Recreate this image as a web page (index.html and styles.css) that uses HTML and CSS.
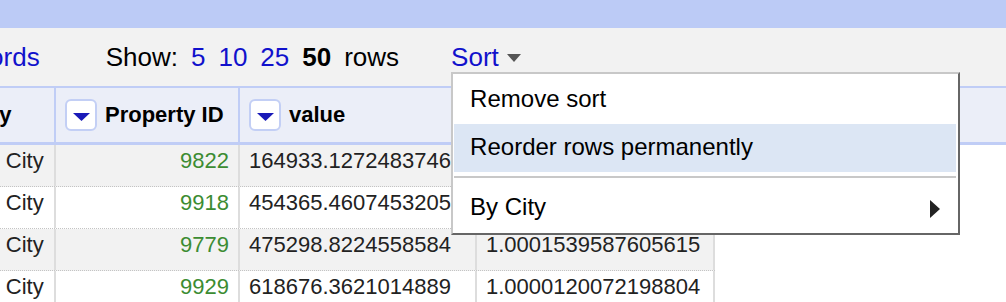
FILE: index.html
```html
<!DOCTYPE html>
<html lang="en">

<head>
    <meta charset="UTF-8">
    <meta name="viewport" content="width=device-width, initial-scale=1.0">
    <title>Rows - Sort</title>
    <link rel="stylesheet" href="styles.css">
</head>

<body>
    <div class="topbar"></div>

    <div class="toolbar">
        <a class="records" href="#">records</a>
        <div class="pager">
            <span>Show:</span>
            <a href="#">5</a>
            <a href="#">10</a>
            <a href="#">25</a>
            <span class="current">50</span>
            <span>rows</span>
        </div>
        <div class="sort">
            <a href="#">Sort</a>
            <span class="caret"></span>

            <!-- sort menu, open -->
            <div class="menu">
                <div class="menu-item">Remove sort</div>
                <div class="menu-item active">Reorder rows permanently</div>
                <div class="menu-sep"></div>
                <div class="menu-item">
                    <span>By City</span>
                    <svg class="submenu" width="10" height="18" viewBox="0 0 10 18">
                        <polygon points="0,0 10,9 0,18" fill="#222" />
                    </svg>
                </div>
            </div>
        </div>
    </div>

    <div class="grid">
        <div class="head">
            <div class="hcell c1"><span class="colbtn"><svg width="17" height="8" viewBox="0 0 17 8"><polygon points="0,0 17,0 8.5,8" /></svg></span>City</div>
            <div class="hcell c2"><span class="colbtn"><svg width="17" height="8" viewBox="0 0 17 8"><polygon points="0,0 17,0 8.5,8" /></svg></span>Property ID</div>
            <div class="hcell c3"><span class="colbtn"><svg width="17" height="8" viewBox="0 0 17 8"><polygon points="0,0 17,0 8.5,8" /></svg></span>value</div>
            <div class="hcell c4"><span class="colbtn"><svg width="17" height="8" viewBox="0 0 17 8"><polygon points="0,0 17,0 8.5,8" /></svg></span>ratio</div>
            <div class="hfill"></div>
        </div>

        <div class="row odd">
            <div class="cell c1">Mexico City</div>
            <div class="cell c2 num">9822</div>
            <div class="cell c3">164933.1272483746</div>
            <div class="cell c4">1.0000606311396284</div>
        </div>
        <div class="row">
            <div class="cell c1">Mexico City</div>
            <div class="cell c2 num">9918</div>
            <div class="cell c3">454365.4607453205</div>
            <div class="cell c4">1.0000220084017537</div>
        </div>
        <div class="row odd">
            <div class="cell c1">Mexico City</div>
            <div class="cell c2 num">9779</div>
            <div class="cell c3">475298.8224558584</div>
            <div class="cell c4">1.0001539587605615</div>
        </div>
        <div class="row">
            <div class="cell c1">Mexico City</div>
            <div class="cell c2 num">9929</div>
            <div class="cell c3">618676.3621014889</div>
            <div class="cell c4">1.0000120072198804</div>
        </div>
    </div>
</body>

</html>
```

FILE: styles.css
```css
html,
body {
    overflow: hidden;
}

body {
    margin: 0;
    background-color: white;
    font-family: "Liberation Sans", Arial, sans-serif;
}

.topbar {
    height: 28px;
    background-color: #bccbf6;
}

/* toolbar with pager and sort */
.toolbar {
    display: flex;
    align-items: center;
    padding: 14px 0;
    background-color: #f2f2f2;
    font-size: 26px;
    line-height: 30px;
    white-space: nowrap;
}

.toolbar a {
    color: #11c;
    text-decoration: none;
}

.records {
    margin-left: -47px;
}

.pager {
    display: flex;
    gap: 13px;
    margin-left: 66px;
}

.pager .current {
    font-weight: bold;
}

.sort {
    position: relative;
    display: flex;
    align-items: center;
    margin-left: 52px;
}

.caret {
    width: 0;
    height: 0;
    margin-left: 8px;
    margin-top: 2px;
    border-left: 7px solid transparent;
    border-right: 7px solid transparent;
    border-top: 8px solid #555;
}

.menu {
    position: absolute;
    top: 30px;
    left: 0;
    z-index: 10;
    width: 502px;
    padding: 2px 2px 1px 1px;
    border: 2px solid;
    border-color: #c8c8c8 #666 #666 #c8c8c8;
    background-color: white;
    color: black;
    font-size: 24px;
    line-height: 28px;
}

.menu-item {
    display: flex;
    justify-content: space-between;
    align-items: center;
    padding: 9px 16px 11px 16px;
}

.menu-item.active {
    background-color: #dce6f4;
}

.menu-sep {
    height: 2px;
    margin: 4px 0 6px;
    background-color: #c8c8c8;
}

.submenu {
    margin-top: 4px;
}

/* data table */
.grid {
    margin-left: -79px;
}

.head {
    display: flex;
    height: 54px;
    border-top: 2px solid #c0cdf6;
    border-bottom: 3px solid #c0cdf6;
    background-color: #ebeef8;
}

.hcell {
    display: flex;
    align-items: center;
    box-sizing: border-box;
    padding-left: 9px;
    border-right: 2px solid #c0cdf6;
    font-size: 22px;
    font-weight: bold;
    color: black;
    white-space: nowrap;
}

.hfill {
    flex: 1;
}

.colbtn {
    display: flex;
    align-items: center;
    justify-content: center;
    box-sizing: border-box;
    width: 32px;
    height: 32px;
    margin-right: 8px;
    padding-top: 3px;
    border: 2px solid #c3cff5;
    border-radius: 6px;
    background-color: white;
}

.colbtn polygon {
    fill: #1a1ab8;
}

.c1 {
    width: 135px;
}

.c2 {
    width: 184px;
}

.c3 {
    width: 237px;
}

.c4 {
    width: 238px;
}

.row {
    display: flex;
    width: fit-content;
    border-bottom: 1px dotted #c4c4c4;
    font-size: 22px;
    line-height: 26px;
    color: #222;
}

.row.odd {
    background-color: #f2f2f2;
}

.cell {
    box-sizing: border-box;
    padding: 3px 9px 12px;
    border-right: 2px solid #ddd;
    white-space: nowrap;
    overflow: hidden;
}

.num {
    text-align: right;
    color: #3c8c32;
}
```
